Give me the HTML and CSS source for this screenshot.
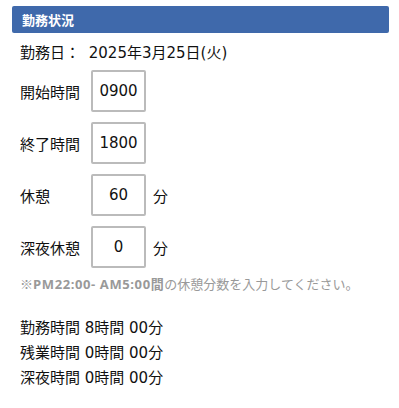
FILE: index.html
```html
<!DOCTYPE html>
<html lang="ja">
<head>
    <meta charset="UTF-8">
    <meta name="viewport" content="width=device-width, initial-scale=1.0">
    <title>勤務状況</title>
    <link rel="stylesheet" href="styles.css">
</head>
<body>
    <div class="panel">
        <div class="panel-title">勤務状況</div>

        <div class="panel-body">
            <p class="work-date">勤務日： <span class="date-value">2025年3月25日(火)</span></p>

            <div class="form-row">
                <label class="row-label" for="start">開始時間</label>
                <input class="time-input" type="text" id="start" value="0900">
            </div>
            <div class="form-row">
                <label class="row-label" for="end">終了時間</label>
                <input class="time-input" type="text" id="end" value="1800">
            </div>
            <div class="form-row">
                <label class="row-label" for="rest">休憩</label>
                <input class="time-input" type="text" id="rest" value="60">
                <span class="unit">分</span>
            </div>
            <div class="form-row">
                <label class="row-label" for="nightRest">深夜休憩</label>
                <input class="time-input" type="text" id="nightRest" value="0">
                <span class="unit">分</span>
            </div>
            <p class="note">※<b>PM22:00- AM5:00間</b>の休憩分数を入力してください。</p>

            <div class="summary">
                <p>勤務時間 8時間 00分</p>
                <p>残業時間 0時間 00分</p>
                <p>深夜時間 0時間 00分</p>
            </div>
        </div>
    </div>
</body>
</html>
```

FILE: styles.css
```css
* {
    margin: 0;
    padding: 0;
    box-sizing: border-box;
}
body {
    font-family: "DejaVu Sans", "Noto Sans CJK JP", sans-serif;
    color: #111;
    background: #fff;
    font-size: 15px;
}
.panel {
    padding: 6px 10px 0 12px;
}
.panel-title {
    background: #3f69ab;
    color: #fff;
    font-family: "Noto Sans CJK JP", sans-serif;
    font-size: 13px;
    font-weight: bold;
    height: 27px;
    line-height: 27px;
    padding-left: 10px;
    border-radius: 2px;
}
.panel-body {
    padding: 8px 0 0 8px;
}
.work-date {
    line-height: 24px;
    margin-bottom: 5px;
}
.date-value {
    margin-left: 4px;
}
.form-row {
    display: flex;
    align-items: center;
    margin-bottom: 10px;
}
.row-label {
    width: 71px;
}
.time-input {
    width: 55px;
    height: 42px;
    border: 2px solid #bbb;
    border-radius: 2px;
    font-family: inherit;
    font-size: 15px;
    color: #111;
    text-align: center;
    outline: none;
}
.unit {
    margin-left: 7px;
}
.note {
    color: #999;
    font-family: "Open Sans", "Noto Sans CJK JP", sans-serif;
    font-size: 13px;
    margin-top: -4px;
    line-height: 20px;
}
.note b {
    letter-spacing: 0.6px;
}
.summary {
    margin-top: 22px;
}
.summary p {
    line-height: 25px;
}
```
